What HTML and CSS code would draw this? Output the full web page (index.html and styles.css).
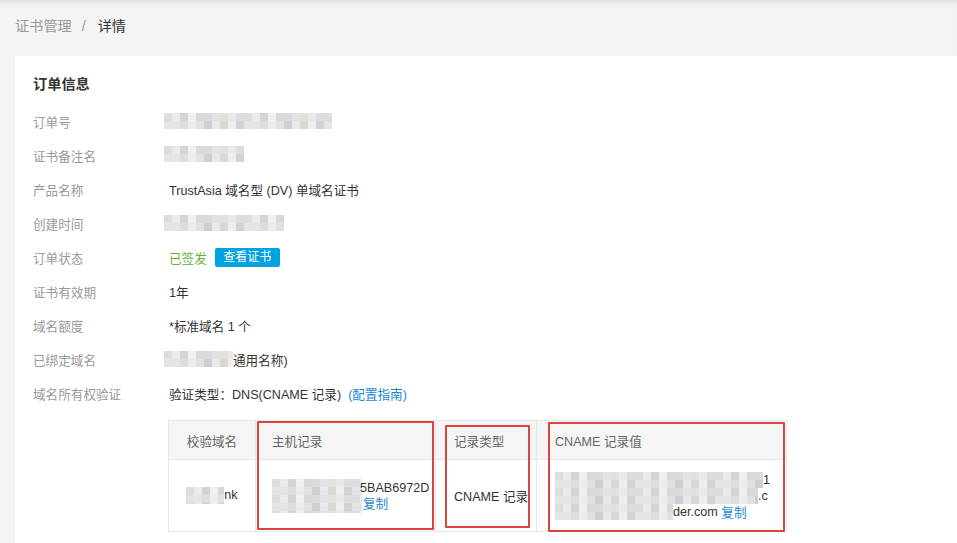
FILE: index.html
```html
<!DOCTYPE html>
<html lang="zh-CN">
<head>
    <meta charset="UTF-8">
    <meta name="viewport" content="width=device-width, initial-scale=1.0">
    <title>证书详情</title>
    <link rel="stylesheet" href="styles.css">
</head>
<body>
<div class="page">
    <!-- 面包屑 -->
    <div class="crumb">
        <span class="crumb-parent">证书管理</span>
        <span class="crumb-sep">/</span>
        <span class="crumb-current">详情</span>
    </div>

    <!-- 订单信息 -->
    <div class="card">
        <div class="card-title">订单信息</div>

        <div class="row">
            <span class="label">订单号</span>
            <span class="value"><span class="mosaic m-order"></span></span>
        </div>
        <div class="row">
            <span class="label">证书备注名</span>
            <span class="value"><span class="mosaic m-note"></span></span>
        </div>
        <div class="row">
            <span class="label">产品名称</span>
            <span class="value">TrustAsia 域名型 (DV) 单域名证书</span>
        </div>
        <div class="row">
            <span class="label">创建时间</span>
            <span class="value"><span class="mosaic m-time"></span></span>
        </div>
        <div class="row">
            <span class="label">订单状态</span>
            <span class="value">
                <span class="status-ok">已签发</span>
                <button class="btn-view">查看证书</button>
            </span>
        </div>
        <div class="row">
            <span class="label">证书有效期</span>
            <span class="value">1年</span>
        </div>
        <div class="row">
            <span class="label">域名额度</span>
            <span class="value">*标准域名 1 个</span>
        </div>
        <div class="row">
            <span class="label">已绑定域名</span>
            <span class="value"><span class="mosaic m-domain"></span>通用名称)</span>
        </div>
        <div class="row">
            <span class="label">域名所有权验证</span>
            <span class="value">验证类型：DNS(CNAME 记录) <a class="link guide">(配置指南)</a></span>
        </div>

        <!-- DNS 验证记录 -->
        <div class="dns-wrap">
            <table class="dns-table">
                <thead>
                    <tr>
                        <th class="col-domain">校验域名</th>
                        <th class="col-host">主机记录</th>
                        <th class="col-type">记录类型</th>
                        <th class="col-value">CNAME 记录值</th>
                    </tr>
                </thead>
                <tbody>
                    <tr>
                        <td class="col-domain"><span class="mosaic m-check"></span>nk</td>
                        <td class="col-host">
                            <div class="host-cell">
                                <span class="mosaic m-host"></span>
                                <div class="host-text">
                                    <div>5BAB6972D</div>
                                    <div><a class="link">复制</a></div>
                                </div>
                            </div>
                        </td>
                        <td class="col-type">CNAME 记录</td>
                        <td class="col-value">
                            <div class="cname-line"><span class="mosaic m-c1"></span>1</div>
                            <div class="cname-line"><span class="mosaic m-c2"></span>.c</div>
                            <div class="cname-line"><span class="mosaic m-c3"></span>der.com&nbsp;<a class="link">复制</a></div>
                        </td>
                    </tr>
                </tbody>
            </table>

            <!-- 标注框 -->
            <div class="mark mark-host"></div>
            <div class="mark mark-type"></div>
            <div class="mark mark-value"></div>
        </div>
    </div>
</div>
</body>
</html>
```

FILE: styles.css
```css
body {
    margin: 0;
    background-color: #f4f4f4;
    font-family: "Liberation Sans", "Noto Sans CJK SC", sans-serif;
    font-size: 12.6px;
    color: #333;
}
.page {
    height: 543px;
    box-shadow: inset 0 7px 7px -5px rgba(0, 0, 0, 0.09);
    overflow: hidden;
}
.crumb {
    height: 56px;
    line-height: 52px;
    padding-left: 15px;
    font-size: 14.2px;
}
.crumb-parent,
.crumb-sep {
    color: #999;
}
.crumb-sep {
    margin: 0 8px 0 6px;
}
.crumb-current {
    color: #333;
}
.card {
    margin-left: 15px;
    background-color: #fff;
    padding: 18px 18px 12px 18px;
}
.card-title {
    font-size: 14.2px;
    font-weight: bold;
    line-height: 20px;
    margin-bottom: 10px;
}
.row {
    display: flex;
    align-items: center;
    height: 34px;
}
.label {
    width: 136px;
    flex-shrink: 0;
    color: #999;
}
.value {
    display: flex;
    align-items: center;
    color: #333;
}
.status-ok {
    color: #6aaf3d;
}
.btn-view {
    margin-left: 8px;
    height: 19px;
    width: 65px;
    padding: 0;
    border: none;
    border-radius: 2px;
    background-color: #00a3e0;
    color: #fff;
    font-family: inherit;
    font-size: 12px;
    line-height: 19px;
}
.link {
    color: #1c8ad3;
    cursor: pointer;
}
.guide {
    margin-left: 7px;
}

/* 马赛克遮挡 */
.mosaic {
    display: inline-block;
    vertical-align: middle;
    background-color: #dedede;
    background-image:
        repeating-conic-gradient(rgba(255, 255, 255, 0.22) 0 25%, transparent 0 50%),
        repeating-linear-gradient(90deg,
            #dcdde0 0 8px, #e7e5e4 8px 16px, #d3d4d7 16px 24px, #ececec 24px 32px,
            #d8d9dc 32px 40px, #cecfd1 40px 48px, #e3e3e5 48px 56px, #dad8d5 56px 64px,
            #e9e9eb 64px 72px, #d2d3d6 72px 80px);
    background-size: 16px 16px, 100% 100%;
}
.m-order {
    width: 168px;
    height: 16px;
    margin-left: -5px;
}
.m-note {
    width: 80px;
    height: 16px;
    margin-left: -5px;
    margin-top: -2px;
}
.m-time {
    width: 120px;
    height: 16px;
    margin-left: -5px;
}
.m-domain {
    width: 69px;
    height: 16px;
    margin-left: -5px;
}
.m-check {
    width: 38px;
    height: 17px;
}
.m-host {
    width: 90px;
    height: 34px;
}
.m-c1 {
    width: 208px;
    height: 16px;
}
.m-c2 {
    width: 203px;
    height: 16px;
}
.m-c3 {
    width: 118px;
    height: 16px;
}

/* DNS 表格 */
.dns-wrap {
    position: relative;
    margin: 10px 0 0 135px;
    width: 619px;
}
.dns-table {
    border-collapse: collapse;
    width: 619px;
    table-layout: fixed;
}
.dns-table th,
.dns-table td {
    box-sizing: border-box;
    border: 1px solid #e8e8e8;
    text-align: left;
    padding: 0 0 0 17px;
}
.dns-table th {
    height: 39px;
    background-color: #f5f5f5;
    font-weight: normal;
    color: #666;
}
.dns-table td {
    height: 72px;
    color: #333;
}
.dns-table .col-domain {
    width: 87px;
    padding: 0;
    text-align: center;
}
.dns-table .col-host {
    width: 180px;
    padding-left: 16px;
}
.dns-table .col-type {
    width: 101px;
    padding-left: 18px;
}
.dns-table .col-value {
    padding-left: 18px;
}
.host-cell {
    display: flex;
    align-items: center;
}
.host-text {
    line-height: 16px;
    margin-left: -2px;
}
.host-text div:last-child {
    padding-left: 3px;
}
.cname-line {
    display: flex;
    align-items: center;
    height: 16px;
    white-space: nowrap;
}

/* 红色标注框 */
.mark {
    position: absolute;
    border: 2px solid #d9473c;
    border-radius: 1px;
}
.mark-host {
    left: 89px;
    top: 1px;
    width: 173px;
    height: 105px;
}
.mark-type {
    left: 277px;
    top: 5px;
    width: 81px;
    height: 99px;
}
.mark-value {
    left: 380px;
    top: 2px;
    width: 233px;
    height: 106px;
}
```
